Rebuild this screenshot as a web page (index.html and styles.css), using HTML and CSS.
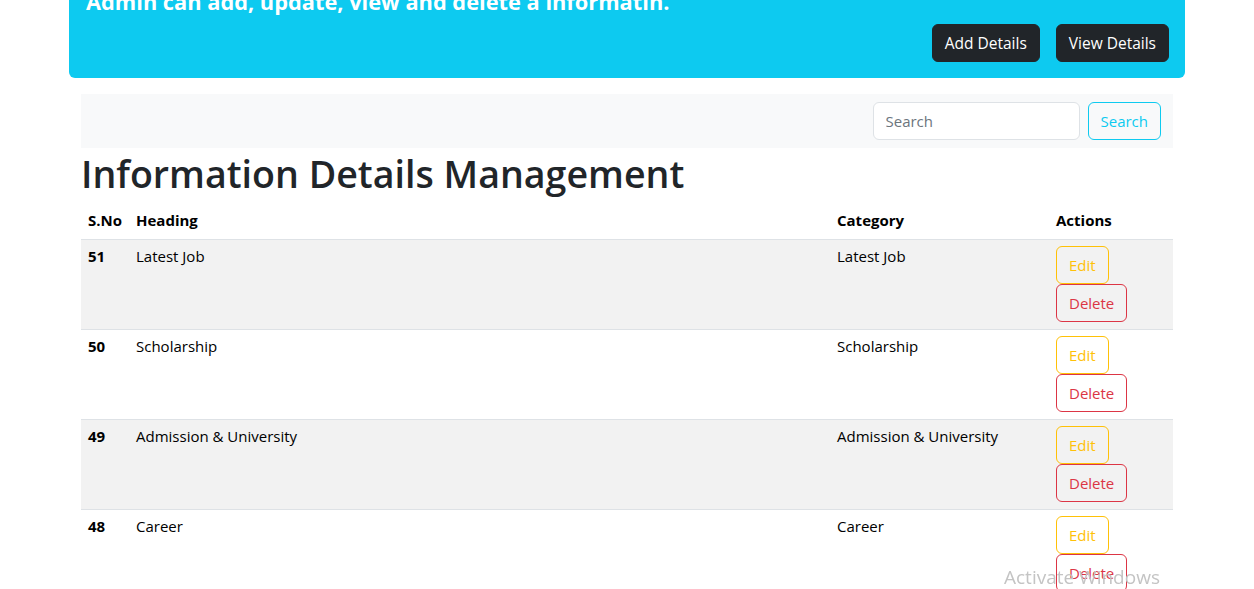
FILE: index.html
```html
<!DOCTYPE html>
<html lang="en">
<head>
<meta charset="utf-8">
<title>Information Details Management</title>
<link rel="stylesheet" href="styles.css">
</head>
<body>
<div class="container">
  <div class="banner">
    <h3 class="banner-title">Admin can add, update, view and delete a informatin.</h3>
    <div class="banner-actions">
      <button class="btn btn-dark">Add Details</button>
      <button class="btn btn-dark">View Details</button>
    </div>
  </div>

  <div class="inner">
    <nav class="searchbar">
      <input class="search-input" type="text" placeholder="Search">
      <button class="btn btn-outline-info">Search</button>
    </nav>

    <h1 class="page-title">Information Details Management</h1>

    <table class="table">
      <colgroup>
        <col class="c-sno"><col class="c-heading"><col class="c-cat"><col class="c-act">
      </colgroup>
      <thead>
        <tr><th>S.No</th><th>Heading</th><th>Category</th><th>Actions</th></tr>
      </thead>
      <tbody>
        <tr class="odd">
          <th>51</th><td>Latest Job</td><td>Latest Job</td>
          <td class="actions"><button class="btn btn-outline-warning">Edit</button><button class="btn btn-outline-danger">Delete</button></td>
        </tr>
        <tr>
          <th>50</th><td>Scholarship</td><td>Scholarship</td>
          <td class="actions"><button class="btn btn-outline-warning">Edit</button><button class="btn btn-outline-danger">Delete</button></td>
        </tr>
        <tr class="odd">
          <th>49</th><td>Admission &amp; University</td><td>Admission &amp; University</td>
          <td class="actions"><button class="btn btn-outline-warning">Edit</button><button class="btn btn-outline-danger">Delete</button></td>
        </tr>
        <tr>
          <th>48</th><td>Career</td><td>Career</td>
          <td class="actions"><button class="btn btn-outline-warning">Edit</button><button class="btn btn-outline-danger">Delete</button></td>
        </tr>
      </tbody>
    </table>
  </div>
</div>
<div class="watermark">Activate Windows</div>
</body>
</html>
```

FILE: styles.css
```css
* { box-sizing: border-box; }
html, body { margin: 0; padding: 0; overflow: hidden; }
body {
  font-family: "Open Sans", "Noto Sans", sans-serif;
  font-size: 16px;
  line-height: 1.5;
  color: #212529;
  background: #fff;
}
.container {
  width: 1116px;
  margin: 0 auto;
}
.banner {
  margin-top: -29px;
  background: #0dcaf0;
  border-radius: 0 0 6px 6px;
  padding: 16px;
  display: flex;
  flex-direction: column;
}
.banner-title {
  margin: 0 0 8px 1px;
  font-size: 21.8px;
  line-height: 29px;
  font-weight: 700;
  color: #fff;
}
.banner-actions {
  display: flex;
  justify-content: flex-end;
  gap: 16px;
}
.btn {
  font-family: inherit;
  font-size: 15.5px;
  line-height: 24px;
  padding: 6px 12px;
  border-radius: 6px;
  border: 1px solid transparent;
  background: transparent;
  cursor: pointer;
}
.btn-dark { background: #212529; border-color: #212529; color: #fff; }
.btn-outline-info { border-color: #0dcaf0; color: #0dcaf0; font-size: 15px; padding: 6px 12px; }
.btn-outline-warning { border-color: #ffc107; color: #ffc107; }
.btn-outline-danger { border-color: #dc3545; color: #dc3545; }

.inner { padding: 0 12px; }
.searchbar {
  margin-top: 16px;
  background: #f8f9fa;
  padding: 8px 12px;
  display: flex;
  justify-content: flex-end;
  gap: 8px;
}
.search-input {
  width: 207px;
  height: 38px;
  border: 1px solid #dee2e6;
  border-radius: 6px;
  padding: 6px 12px;
  font-family: inherit;
  font-size: 15px;
  color: #212529;
  background: #fff;
}
.search-input::placeholder { color: #6c757d; }
.page-title {
  margin: 2px 0 3px 0;
  font-size: 37.6px;
  line-height: 48px;
  font-weight: 600;
  color: #212529;
}
.table {
  width: 100%;
  border-collapse: collapse;
  table-layout: fixed;
  color: #000;
}
.c-sno { width: 48px; }
.c-heading { width: 701px; }
.c-cat { width: 219px; }
.c-act { width: 124px; }
.table th, .table td {
  text-align: left;
  vertical-align: top;
  padding: 8px 7px;
  border-bottom: 1px solid #dee2e6;
  font-size: 15px;
}
.table thead th { font-weight: 700; padding-bottom: 7px; }
.table tbody th { font-weight: 700; }
.table tbody td, .table tbody th { padding-top: 5px; padding-bottom: 7px; height: 90px; }
.table tbody tr.odd { background: #f2f2f2; }
.table td.actions { padding-top: 6px; padding-bottom: 7px; }
.actions .btn { display: block; width: fit-content; font-size: 15px; }
.watermark {
  position: fixed;
  left: 1004px;
  top: 563px;
  font-size: 19px;
  color: #c4c4c4;
  font-family: "Open Sans", sans-serif;
  pointer-events: none;
}
```
